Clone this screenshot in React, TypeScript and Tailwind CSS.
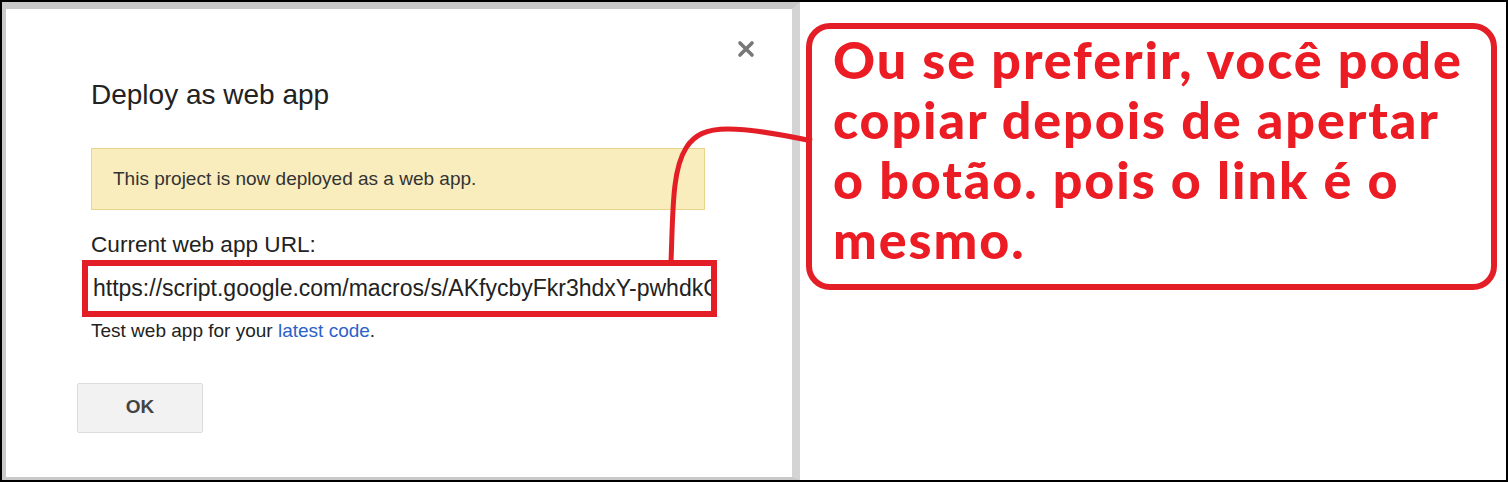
export default function App() {
    return (
        <div className="relative flex w-[1508px] h-[482px] overflow-hidden border-2 border-black bg-white font-['Liberation_Sans',Arial,sans-serif]">
            {/* dialog screenshot */}
            <div className="w-[798px] h-full border-t-[7px] border-l-[4px] border-r-[8px] border-b-[3px] border-[#c9c9c9] border-r-[#d4d4d4] bg-white">
                <div className="flex justify-end pt-[31px] pr-[37px]">
                    <svg width="18" height="18" viewBox="0 0 18 18">
                        <path d="M3 3 L15 15 M15 3 L3 15" stroke="#777" strokeWidth="3.6" strokeLinecap="round" />
                    </svg>
                </div>

                <div className="pl-[85px]">
                    <h1 className="mt-[23px] text-[28px] leading-none text-[#222]">Deploy as web app</h1>

                    <div className="mt-[39px] flex items-center w-[614px] h-[62px] pl-[21px] border border-[#e8d48c] bg-[#f9edbe] text-[19px] text-[#333]">
                        This project is now deployed as a web app.
                    </div>

                    <div className="mt-[24px] text-[22.6px] leading-none text-[#222]">Current web app URL:</div>

                    <div className="mt-[3px] -ml-[9px] w-[635px] h-[57px] border-[6px] border-[#e41e26]">
                        <div className="flex items-center h-full pl-[5px] pr-[4px] overflow-hidden whitespace-nowrap text-[23px] text-[#222]">
                            https://script.google.com/macros/s/AKfycbyFkr3hdxY-pwhdkC0x9e
                        </div>
                    </div>

                    <div className="mt-[4px] text-[19px] leading-none text-[#222]">
                        Test web app for your <span className="text-[#2a62c9]">latest code</span>.
                    </div>

                    <button className="mt-[43px] -ml-[14px] w-[126px] h-[50px] rounded-[2px] border border-[#dcdcdc] bg-[#f2f2f2] text-[19px] font-bold text-[#444]">
                        OK
                    </button>
                </div>
            </div>

            {/* callout */}
            <div className="flex-1 pl-[6px] pt-[21px]">
                <div className="w-[691px] h-[267px] rounded-[24px] border-[6px] border-[#e41e26] pl-[21px]">
                    <p className="font-['Lato',sans-serif] font-black text-[52px] leading-[60px] tracking-[1.9px] text-[#ec1c24]">
                        Ou se preferir, você pode
                        <br />
                        copiar depois de apertar
                        <br />
                        o botão. pois o link é o
                        <br />
                        mesmo.
                    </p>
                </div>
            </div>

            {/* connector line from url box to callout */}
            <svg className="absolute left-0 top-0 pointer-events-none" width="1508" height="482">
                <path
                    d="M669 260 C671 210, 670 168, 684 146 C692 133, 704 127, 726 127 C752 127, 782 133, 810 139"
                    fill="none"
                    stroke="#e41e26"
                    strokeWidth="5"
                />
            </svg>
        </div>
    );
}
